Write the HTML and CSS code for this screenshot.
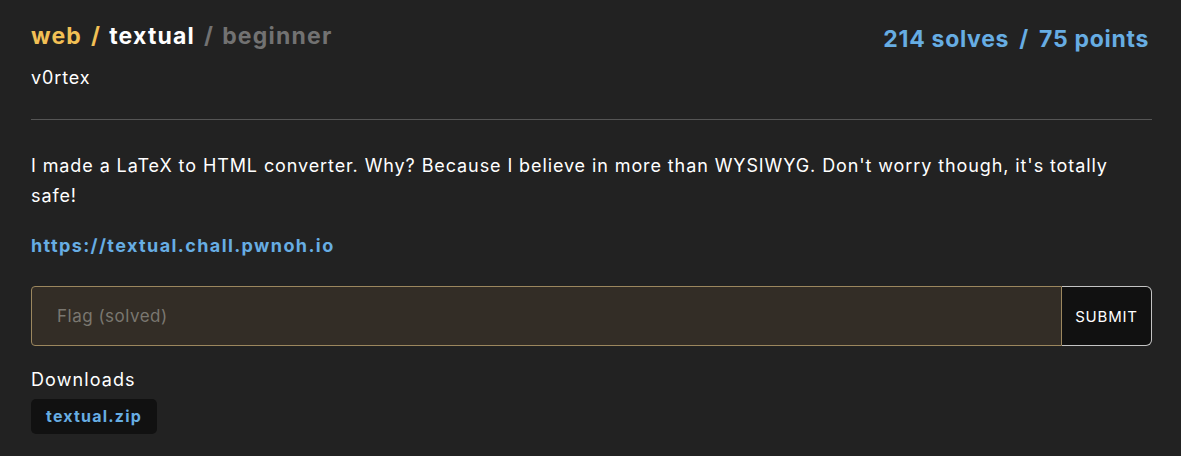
FILE: index.html
```html
<!DOCTYPE html>
<html>
<head>
<meta charset="utf-8">
<link rel="stylesheet" href="styles.css">
</head>
<body>
<div class="page">
  <header class="head">
    <div class="head-left">
      <h1 class="crumbs"><span class="cat">web</span><span class="sep sep-y">/</span><span class="name">textual</span><span class="sep sep-g">/</span><span class="diff">beginner</span></h1>
      <div class="author">v0rtex</div>
    </div>
    <div class="stats">214 solves <span class="slash">/</span> 75 points</div>
  </header>
  <hr class="rule">
  <p class="desc">I made a LaTeX to HTML converter. Why? Because I believe in more than WYSIWYG. Don't worry though, it's totally safe!</p>
  <a class="link" href="#">https://textual.chall.pwnoh.io</a>
  <form class="flag-form">
    <input class="flag-input" type="text" placeholder="Flag (solved)">
    <button class="submit" type="button">SUBMIT</button>
  </form>
  <div class="downloads">Downloads</div>
  <a class="file" href="#">textual.zip</a>
</div>
</body>
</html>
```

FILE: styles.css
```css
html, body {
  margin: 0;
  padding: 0;
  background: #222222;
}
body {
  font-family: Inter, "Open Sans", sans-serif;
  color: #ffffff;
}
.page {
  padding: 20px 29px 0 31px;
  display: flex;
  flex-direction: column;
  align-items: flex-start;
}
.head {
  display: flex;
  justify-content: space-between;
  align-items: flex-start;
  align-self: stretch;
}
.crumbs {
  margin: 0;
  font-size: 23px;
  font-weight: 700;
  line-height: 32px;
  letter-spacing: 1.2px;
  display: flex;
}
.sep { margin: 0 8px 0 9px; }
.cat, .sep-y { color: #f2c055; }
.name { color: #ffffff; }
.sep-g, .diff { color: #727272; }
.author {
  margin-top: 14px;
  font-size: 18px;
  line-height: 24px;
  letter-spacing: 0.9px;
}
.stats {
  margin-top: 3px;
  margin-right: 3px;
  font-size: 23px;
  font-weight: 700;
  color: #67ade3;
  line-height: 32px;
  letter-spacing: 0.7px;
}
.slash { margin: 0 4px; }
.rule {
  align-self: stretch;
  margin: 29px 0 0 0;
  border: 0;
  border-top: 1px solid #555555;
}
.desc {
  margin: 31px 0 0 0;
  font-size: 18px;
  line-height: 30px;
  letter-spacing: 0.9px;
}
.link {
  margin-top: 23px;
  font-size: 18px;
  font-weight: 700;
  color: #67ade3;
  text-decoration: none;
  line-height: 24px;
  letter-spacing: 1.4px;
}
.flag-form {
  align-self: stretch;
  display: flex;
  margin-top: 28px;
}
.flag-input {
  flex: 1;
  height: 60px;
  box-sizing: border-box;
  background: #332d26;
  border: 1px solid #9c875e;
  border-radius: 4px 0 0 4px;
  padding: 0 25px;
  font-family: inherit;
  font-size: 17px;
  letter-spacing: 0.5px;
  color: #ffffff;
  outline: none;
}
.flag-input::placeholder { color: #7a7770; }
.submit {
  width: 90px;
  height: 60px;
  background: #111111;
  border: 1px solid #c4c4c4;
  border-left: 0;
  border-radius: 0 6px 6px 0;
  color: #ffffff;
  font-family: inherit;
  font-size: 15px;
  letter-spacing: 0.8px;
  font-weight: 400;
  padding: 0;
}
.downloads {
  margin-top: 22px;
  font-size: 18px;
  line-height: 24px;
  letter-spacing: 1.1px;
}
.file {
  margin-top: 7px;
  background: #111111;
  border-radius: 5px;
  padding: 0 15px;
  height: 35px;
  line-height: 35px;
  font-size: 16px;
  font-weight: 700;
  letter-spacing: 1.2px;
  color: #67ade3;
  text-decoration: none;
}
```
